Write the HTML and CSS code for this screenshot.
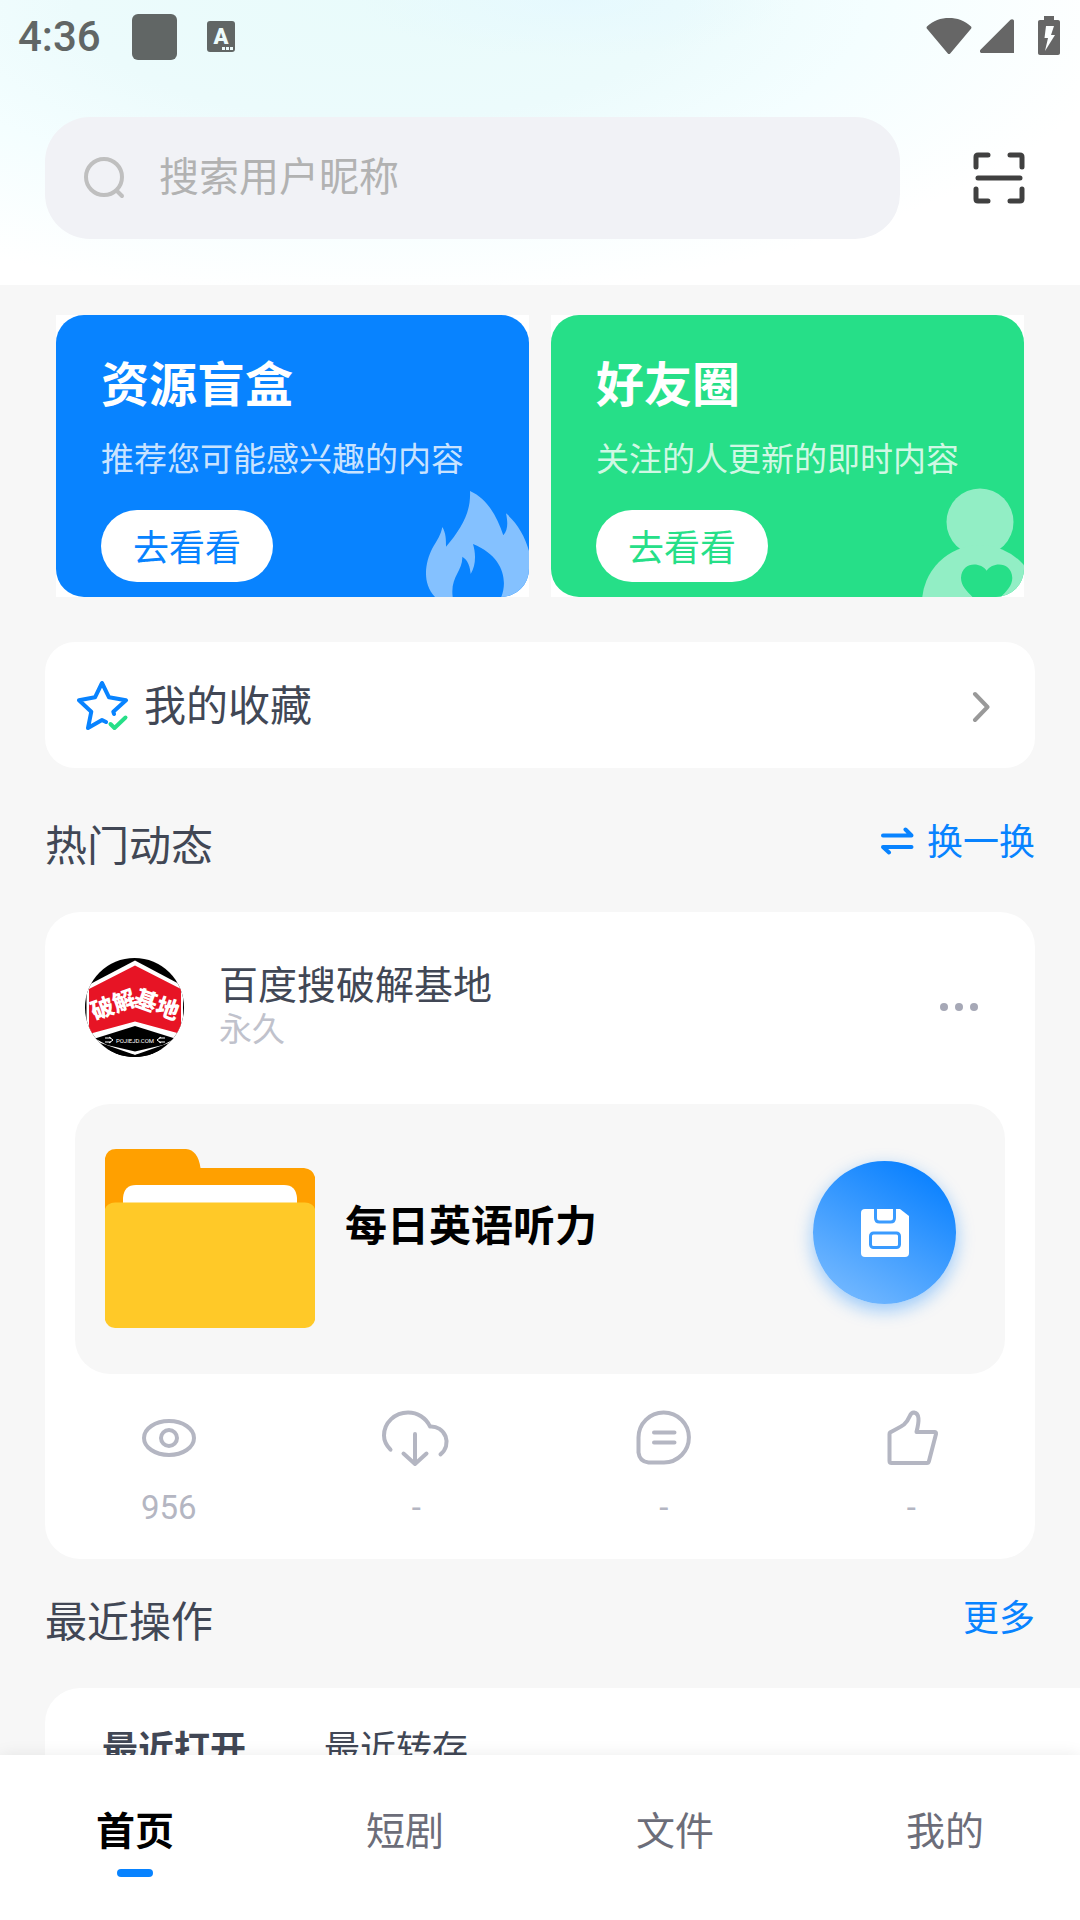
FILE: index.html
```html
<!DOCTYPE html>
<html lang="zh-CN">
<head>
    <meta charset="UTF-8">
    <meta name="viewport" content="width=device-width, initial-scale=1.0">
    <title>首页</title>
    <link rel="stylesheet" href="styles.css">
</head>
<body>
    <header class="header">
        <div class="status-bar">
            <span class="status-time">4:36</span>
            <span class="status-square"></span>
            <svg class="status-input" width="28" height="32" viewBox="0 0 28 32">
                <rect width="28" height="31" rx="3" fill="#616665"/>
                <text class="status-letter" x="14" y="23" text-anchor="middle">A</text>
                <path d="M15 26h3v3h-3zM19 26h3v3h-3zM23 26h3v3h-3z" fill="#ecfbfb"/>
            </svg>
            <span class="status-signals">
                <svg width="46" height="38" viewBox="0 0 46 38">
                    <path d="M1 9.500C7 3.500 15 1 23 1s16 2.500 22 8.500c.6.700.6 1.600 0 2.300L24.200 36.500c-.7.700-1.700.700-2.400 0L1 11.800c-.6-.7-.6-1.600 0-2.300z" fill="#666"/>
                </svg>
                <svg class="icon-cell" width="34" height="36" viewBox="0 0 34 36">
                    <path d="M30.500 1.800c1.300-1.300 3.500-.6 3.500 1.200v32H2c-2 0-2.700-2-1.500-3.300z" fill="#666"/>
                </svg>
                <svg width="22" height="40" viewBox="0 0 22 40">
                    <path fill-rule="evenodd" d="M6 0h10v4h4c1.200 0 2 .8 2 2v31c0 1.200-.8 2-2 2H2c-1.200 0-2-.8-2-2V6c0-1.200.8-2 2-2h4zM8 10 6.500 22H10L7 35l10-16h-4l3-9z" fill="#666"/>
                </svg>
            </span>
        </div>
        <div class="search-row">
            <label class="search-box">
                <svg width="42" height="42" viewBox="0 0 42 42" fill="none" stroke="#bfbfbf" stroke-width="4" stroke-linecap="round">
                    <circle cx="20" cy="20" r="18"/>
                    <path d="m33 34 5 5"/>
                </svg>
                <input class="search-input" type="text" placeholder="搜索用户昵称" aria-label="搜索用户昵称">
            </label>
            <button class="scan-btn" type="button" aria-label="扫一扫">
                <svg width="54" height="54" viewBox="0 0 54 54" fill="none" stroke="#404040" stroke-width="5" stroke-linecap="round" stroke-linejoin="round">
                    <path d="M4 16V6q0-2 2-2h10M38 4h10q2 0 2 2v10M50 38v10q0 2-2 2H38M16 50H6q-2 0-2-2V38M6 27h42"/>
                </svg>
            </button>
        </div>
    </header>

    <main class="content">
        <section class="promos">
            <article class="promo">
                <div class="promo-inner blue">
                    <h2 class="promo-title">资源盲盒</h2>
                    <p class="promo-text">推荐您可能感兴趣的内容</p>
                    <button class="promo-btn" type="button">去看看</button>
                    <svg class="promo-art" width="110" height="112" viewBox="0 0 110 112" fill="#84c1ff">
                        <path d="M51 6C69 14 78 32 84.300 50.300 89 45 89 38 87 28.300 98 38 106 51 110 66V112H82.300C89 95 84 71 54 59 57 69 57 80 51.700 89 51 82 49 75 43.300 71.700 44 86 31 92 33.700 112H16C2 97 7 76 13 64 18 55 22 50 23.300 42 27 48 27 55 27 61.700 43 43 52 27 51 6z"/>
                    </svg>
                </div>
            </article>
            <article class="promo">
                <div class="promo-inner green">
                    <h2 class="promo-title">好友圈</h2>
                    <p class="promo-text">关注的人更新的即时内容</p>
                    <button class="promo-btn" type="button">去看看</button>
                    <svg class="promo-art" width="110" height="112" viewBox="0 0 110 112">
                        <circle cx="66" cy="37" r="33.500" fill="#92eec5"/>
                        <circle cx="66" cy="118" r="58" fill="#92eec5"/>
                        <path d="M72.700 85.700C79 76 98 77 98.300 93c0 8-6 13-11.300 19l-14 14-14.500-14C53 106 47 101 47 93c.5-16 19-17 25.700-7.300z" fill="#26df88"/>
                    </svg>
                </div>
            </article>
        </section>

        <a class="favorites" href="#">
            <svg width="52" height="52" viewBox="0 0 52 52" fill="none" stroke-width="4" stroke-linecap="round" stroke-linejoin="round">
                <path d="M37 33 36.300 30.700 49 19.300 32 16.300 25 2 18 16.300 2 19.300 14.300 30.700 11 47 25 39l4 2" stroke="#0883ff"/>
                <path d="m33.500 43 4 4L48.500 36.500" stroke="#26df88"/>
            </svg>
            <span class="favorites-text">我的收藏</span>
            <svg width="18" height="32" viewBox="0 0 18 32" fill="none" stroke="#999" stroke-width="4" stroke-linecap="round" stroke-linejoin="round">
                <path d="m3 3 12.500 13L3 29"/>
            </svg>
        </a>

        <div class="section-head">
            <h2 class="section-title">热门动态</h2>
            <button class="section-link" type="button">
                <svg width="34" height="32" viewBox="0 0 34 32" fill="none" stroke="#0883ff" stroke-width="4" stroke-linecap="round" stroke-linejoin="round">
                    <path d="M3 8.500h28.500l-6-6M31.500 20H3l6 5.500"/>
                </svg>
                换一换
            </button>
        </div>

        <article class="post">
            <div class="post-head">
                <svg class="avatar" width="99" height="99" viewBox="0 0 99 99" role="img" aria-label="破解基地">
                    <clipPath id="avatar-clip"><circle cx="49.500" cy="49.500" r="49.500"/></clipPath>
                    <g clip-path="url(#avatar-clip)">
                        <rect width="99" height="99"/>
                        <path d="M50 2.500 98 28v52L50 97 1.500 80V28z" fill="#fff"/>
                        <path d="M50 7.500 96 31v45L50 63.500 4 76V31z" fill="#e71425"/>
                        <path d="M50 68 90 80.500 78 87 50 93.500 22 87 10 80.500z"/>
                        <path d="M0 86 50 97l49-11v13H0z"/>
                        <path d="M20 80h6m-6 4h6m-2-5 4 3-4 3M80 80h-6m6 4h-6m2-5-4 3 4 3" fill="none" stroke="#fff"/>
                    </g>
                    <text class="avatar-text" transform="rotate(-20 28 46)" x="28" y="55" text-anchor="middle">破解</text>
                    <text class="avatar-text" transform="rotate(20 72 46)" x="72" y="55" text-anchor="middle">基地</text>
                    <text class="avatar-site" x="50" y="85" text-anchor="middle">POJIEJD.COM</text>
                </svg>
                <div class="post-author">
                    <div class="post-name">百度搜破解基地</div>
                    <div class="post-time">永久</div>
                </div>
                <button class="more-btn" type="button" aria-label="更多操作">
                    <svg width="40" height="10" viewBox="0 0 40 10" fill="#a6a8b6">
                        <circle cx="5" cy="4" r="4"/>
                        <circle cx="20" cy="4" r="4"/>
                        <circle cx="35" cy="4" r="4"/>
                    </svg>
                </button>
            </div>

            <div class="file">
                <svg width="210" height="210" viewBox="0 0 210 210">
                    <path d="M0 80V24q2-9 11-9h70q12 1 14.500 19H199q9 1 11 9v38z" fill="#ffa000"/>
                    <path d="M18 70v-6q1-13 13-13h148q12 0 13 13v6z" fill="#fff"/>
                    <path d="M0 75q2-6 10-6.500h190q8 .5 10 6.500v111q-2 7-10 8H10q-8-1-10-8z" fill="#ffc928"/>
                </svg>
                <h3 class="file-name">每日英语听力</h3>
                <button class="save-btn" type="button" aria-label="保存">
                    <svg width="48" height="48" viewBox="0 0 48 48">
                        <path d="M4 0h35l9 7v37q0 4-4 4H4q-4 0-4-4V4q0-4 4-4z" fill="#fff"/>
                        <path d="M14.500 0v9q0 4 4 4h11q4 0 4-4V0" fill="none" stroke="#3a9bff" stroke-width="3"/>
                        <rect x="9.500" y="24" width="29" height="14.500" rx="3" fill="none" stroke="#3a9bff" stroke-width="3"/>
                    </svg>
                </button>
            </div>

            <div class="stats">
                <button class="stat" type="button" aria-label="浏览 956">
                    <svg class="stat-icon" viewBox="0 0 72 72">
                        <ellipse cx="36" cy="36" rx="25" ry="17"/>
                        <circle cx="36" cy="36" r="8"/>
                    </svg>
                    <span>956</span>
                </button>
                <button class="stat" type="button" aria-label="下载">
                    <svg class="stat-icon" viewBox="0 0 72 72">
                        <path d="M10.500 47.700C6 43 4 38 4 33.500 4 20.500 15 10.500 28 10.500A24 24 0 0 1 50 24.500 15.500 15.500 0 0 1 60.500 52.300M35 32v30M23.500 51.500 35 62l11.500-10.500"/>
                    </svg>
                    <span>-</span>
                </button>
                <button class="stat" type="button" aria-label="评论">
                    <svg class="stat-icon" viewBox="0 0 72 72">
                        <path d="M36 60.500H20.500q-9-1-10-10V35.500A25.200 25 0 1 1 36 60.500zM26 30.500h20.500M26 40.500h20.500"/>
                    </svg>
                    <span>-</span>
                </button>
                <button class="stat" type="button" aria-label="点赞">
                    <svg class="stat-icon" viewBox="0 0 72 72">
                        <path d="M15 30.500c-.5.300-.500 1-.500 1.500v27q0 2 2 2h35.500q1.500 0 2-2L61 32q.3-2-1.500-2H41.500c3-12 3-18.500-2.500-19.500-5-.5-3 6-10 12-4.500 3.500-9 5-14 8z"/>
                    </svg>
                    <span>-</span>
                </button>
            </div>
        </article>

        <div class="section-head">
            <h2 class="section-title">最近操作</h2>
            <a class="section-link" href="#">更多</a>
        </div>

        <section class="recent">
            <button class="recent-tab active" type="button">最近打开</button>
            <button class="recent-tab" type="button">最近转存</button>
        </section>
    </main>

    <nav class="tabbar">
        <a class="tab active" href="#">首页</a>
        <a class="tab" href="#">短剧</a>
        <a class="tab" href="#">文件</a>
        <a class="tab" href="#">我的</a>
    </nav>
</body>
</html>
```
FILE: styles.css
```css
* {
    box-sizing: border-box;
    margin: 0;
    padding: 0;
}
body {
    display: flex;
    flex-direction: column;
    height: 100vh;
    background: #f7f7f7;
    color: #414755;
    font-family: Roboto, "Noto Sans CJK SC", sans-serif;
    font-size: 36px;
    line-height: 50px;
}
button {
    border: none;
    background: none;
    color: inherit;
    font: inherit;
    cursor: pointer;
}
a {
    color: inherit;
    text-decoration: none;
}
svg {
    display: block;
    flex-shrink: 0;
}

/* header */
.header {
    flex-shrink: 0;
    padding-bottom: 46px;
    background:
        radial-gradient(ellipse 20% 20% at 53% 0, rgba(228, 248, 255, 0.7), rgba(228, 248, 255, 0)),
        radial-gradient(ellipse 70% 105% at 35% 0, #e9fbfb 0%, #ecfbfc 40%, #f4feff 65%, #fff 100%);
    background-color: #fff;
}
.status-bar {
    display: flex;
    align-items: center;
    height: 72px;
    padding: 2px 20px 0 18px;
}
.status-time {
    margin-right: 31px;
    color: #616665;
    font-size: 42px;
    font-weight: 500;
}
.status-square {
    width: 45px;
    height: 46px;
    margin-right: 30px;
    border-radius: 6px;
    background: #616665;
}
.status-letter {
    fill: #ecfbfb;
    font-size: 22px;
    font-weight: 900;
}
.status-signals {
    display: flex;
    align-items: center;
    margin-left: auto;
    padding-bottom: 3px;
}
.icon-cell {
    margin: 0 24px 0 8px;
}
.search-row {
    display: flex;
    align-items: center;
    gap: 72px;
    padding: 45px 54px 0 45px;
}
.search-box {
    display: flex;
    flex: 1;
    align-items: center;
    gap: 33px;
    height: 122px;
    padding: 0 39px;
    border-radius: 45px;
    background: #f1f2f6;
}
.search-input {
    flex: 1;
    min-width: 0;
    border: none;
    outline: none;
    background: none;
    color: #414755;
    font: inherit;
    font-size: 40px;
}
.search-input::placeholder {
    color: #b2b2b2;
}

/* content */
.content {
    flex: 1;
    min-height: 0;
    padding: 30px 45px 0;
    overflow: hidden;
}
.promos {
    display: grid;
    grid-template-columns: 1fr 1fr;
    gap: 22px;
    margin: 0 11px 45px;
}
.promo {
    background: #fff;
}
.promo-inner {
    position: relative;
    padding: 41px 45px 15px;
    border-radius: 28px;
    overflow: hidden;
}
.promo-inner.blue {
    background: #0883ff;
    color: #0883ff;
}
.promo-inner.green {
    background: #26df88;
    color: #26df88;
}
.promo-title {
    margin-bottom: 22px;
    color: #fff;
    font-size: 48px;
    line-height: 60px;
}
.promo-text {
    margin-bottom: 28px;
    color: rgba(255, 255, 255, 0.8);
    font-size: 33px;
    line-height: 44px;
    white-space: nowrap;
}
.promo-btn {
    display: block;
    padding: 17px 32px 11px;
    border-radius: 36px;
    background: #fff;
    line-height: 44px;
}
.promo-art {
    position: absolute;
    right: 0;
    bottom: 0;
}
.favorites {
    display: flex;
    align-items: center;
    gap: 15px;
    height: 126px;
    margin-bottom: 49px;
    padding: 3px 45px 0 32px;
    border-radius: 30px;
    background: #fff;
}
.favorites-text {
    flex: 1;
    font-size: 42px;
}
.section-head {
    display: flex;
    justify-content: space-between;
    align-items: flex-start;
    margin-bottom: 35px;
}
.section-title {
    font-size: 42px;
    font-weight: 400;
    line-height: 60px;
}
.section-link {
    display: flex;
    align-items: center;
    gap: 13px;
    padding-top: 1px;
    color: #0883ff;
}

/* post */
.post {
    margin-bottom: 34px;
    padding: 46px 0 29px;
    border-radius: 35px;
    background: #fff;
}
.post-head {
    display: flex;
    align-items: center;
    gap: 35px;
    margin-bottom: 47px;
    padding: 0 56px 0 40px;
}
.avatar-text {
    fill: #fff;
    font-size: 23px;
    font-weight: 900;
}
.avatar-site {
    fill: #fff;
    font-size: 6px;
}
.post-author {
    flex: 1;
    line-height: 44px;
}
.post-name {
    font-size: 39px;
}
.post-time {
    color: #c0c2cc;
    font-size: 33px;
}
.file {
    display: flex;
    align-items: center;
    gap: 30px;
    margin: 0 30px 28px;
    padding: 30px 49px 30px 30px;
    border-radius: 35px;
    background: #f7f7f7;
}
.file-name {
    flex: 1;
    padding-bottom: 24px;
    color: #000;
    font-size: 42px;
    font-weight: 700;
}
.save-btn {
    display: flex;
    align-items: center;
    justify-content: center;
    width: 143px;
    height: 143px;
    margin-bottom: 13px;
    border-radius: 50%;
    background: linear-gradient(30deg, #73b8ff 10%, #0880ff 90%);
    box-shadow: 0 6px 18px rgba(8, 131, 255, 0.4);
}
.stats {
    display: grid;
    grid-template-columns: repeat(4, 1fr);
}
.stat {
    display: flex;
    flex-direction: column;
    align-items: center;
    gap: 12px;
    color: #b4b6c2;
    font-size: 33px;
    line-height: 44px;
}
.stat-icon {
    width: 72px;
    height: 72px;
    fill: none;
    stroke: #b4b6c2;
    stroke-width: 4;
    stroke-linecap: round;
    stroke-linejoin: round;
}

/* recent */
.recent {
    display: flex;
    gap: 78px;
    margin-right: -45px;
    padding: 37px 57px;
    border-radius: 35px 0 0 0;
    background: #fff;
}
.recent-tab.active {
    font-weight: 700;
}

/* bottom tabs */
.tabbar {
    display: grid;
    flex-shrink: 0;
    grid-template-columns: repeat(4, 1fr);
    position: relative;
    padding: 52px 0 43px;
    background: #fff;
    box-shadow: 0 0 16px rgba(0, 0, 0, 0.08);
}
.tab {
    display: flex;
    flex-direction: column;
    align-items: center;
    gap: 12px;
    color: #6c6d79;
    font-size: 39px;
}
.tab.active {
    color: #000;
    font-weight: 700;
}
.tab::after {
    content: "";
    width: 36px;
    height: 8px;
    border-radius: 4px;
}
.tab.active::after {
    background: #0883ff;
}
```
